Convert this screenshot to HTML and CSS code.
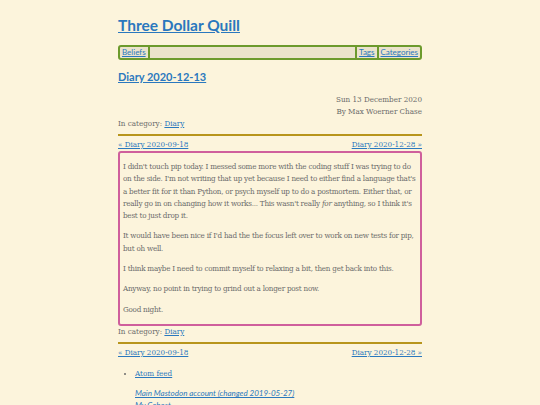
FILE: index.html
```html
<!DOCTYPE html>
<html>
<head>
<meta charset="utf-8">
<link rel="stylesheet" href="styles.css">
</head>
<body>
<div class="page">
  <header class="site-header">
    <h1 class="site-title"><a href="#">Three Dollar Quill</a></h1>
    <nav class="nav">
      <a class="nav-item" href="#">Beliefs</a>
      <span class="nav-fill"></span>
      <a class="nav-item" href="#">Tags</a>
      <a class="nav-item last" href="#">Categories</a>
    </nav>
  </header>
  <article>
    <h2 class="post-title"><a href="#">Diary 2020-12-13</a></h2>
    <div class="meta">
      <div>Sun 13 December 2020</div>
      <div>By Max Woerner Chase</div>
    </div>
    <div class="category">In category: <a href="#">Diary</a></div>
    <hr class="rule">
    <div class="pager"><a href="#">« Diary 2020-09-18</a><a href="#">Diary 2020-12-28 »</a></div>
    <div class="content">
      <p>I didn't touch pip today. I messed some more with the coding stuff I was trying to do on the side. I'm not writing that up yet because I need to either find a language that's a better fit for it than Python, or psych myself up to do a postmortem. Either that, or really go in on changing how it works... This wasn't really <em>for</em> anything, so I think it's best to just drop it.</p>
      <p>It would have been nice if I'd had the the focus left over to work on new tests for pip, but oh well.</p>
      <p>I think maybe I need to commit myself to relaxing a bit, then get back into this.</p>
      <p>Anyway, no point in trying to grind out a longer post now.</p>
      <p>Good night.</p>
    </div>
    <div class="category after-content">In category: <a href="#">Diary</a></div>
    <hr class="rule">
    <div class="pager"><a href="#">« Diary 2020-09-18</a><a href="#">Diary 2020-12-28 »</a></div>
  </article>
  <footer class="footer">
    <ul class="feeds"><li><a href="#">Atom feed</a></li></ul>
    <div class="social">
      <a href="#">Main Mastodon account (changed 2019-05-27)</a>
      <a href="#">My Cohost</a>
    </div>
  </footer>
</div>
</body>
</html>
```
FILE: styles.css
```css
html, body {
  margin: 0;
  padding: 0;
  background: #fcf4dc;
}
body {
  font-family: "DejaVu Serif Condensed", "Liberation Serif", serif;
  color: #6b6b6b;
  font-size: 8px;
}
a {
  color: #2a78be;
}
.page {
  width: 304px;
  margin: 0 auto;
  padding-top: 14px;
}
.site-title {
  margin: 0;
  font-family: "Lato", sans-serif;
  font-weight: 700;
  font-size: 15.5px;
  line-height: 22px;
}
.nav {
  margin-top: 9px;
  display: flex;
  border: 2px solid #6c9a2c;
  border-radius: 3px;
  background: #ebe3cb;
  height: 11px;
  font-family: "Lato", sans-serif;
  font-size: 8px;
  line-height: 11px;
}
.nav-item {
  padding: 0 2px;
  border-right: 2px solid #6c9a2c;
}
.nav-item.last {
  border-right: 0;
}
.nav-fill {
  flex: 1;
  border-right: 2px solid #6c9a2c;
}
.post-title {
  margin: 9px 0 0;
  font-family: "Lato", sans-serif;
  font-weight: 700;
  font-size: 11px;
  line-height: 16px;
}
.meta {
  margin-top: 9px;
  text-align: right;
  line-height: 12px;
}
.category {
  line-height: 12px;
}
.category.after-content {
  margin-top: 0;
}
.rule {
  border: 0;
  height: 2px;
  background: #b8951c;
  margin: 4px 0 3px;
}
.pager {
  display: flex;
  justify-content: space-between;
  line-height: 12px;
}
.content {
  border: 2px solid #cf5f9c;
  border-radius: 3px;
  padding: 4px 4px 0 3px;
  letter-spacing: -0.24px;
}
.content p {
  margin: 4px 0 8px;
  line-height: 12.3px;
}
.feeds {
  margin: 9px 0 0;
  padding-left: 17px;
  line-height: 12px;
}
.feeds li {
  margin: 0;
}
.social {
  margin-top: 7px;
  padding-left: 17px;
  display: flex;
  flex-direction: column;
  font-family: "Lato", sans-serif;
  font-style: italic;
  line-height: 12px;
}
.social a {
  align-self: flex-start;
}
```
